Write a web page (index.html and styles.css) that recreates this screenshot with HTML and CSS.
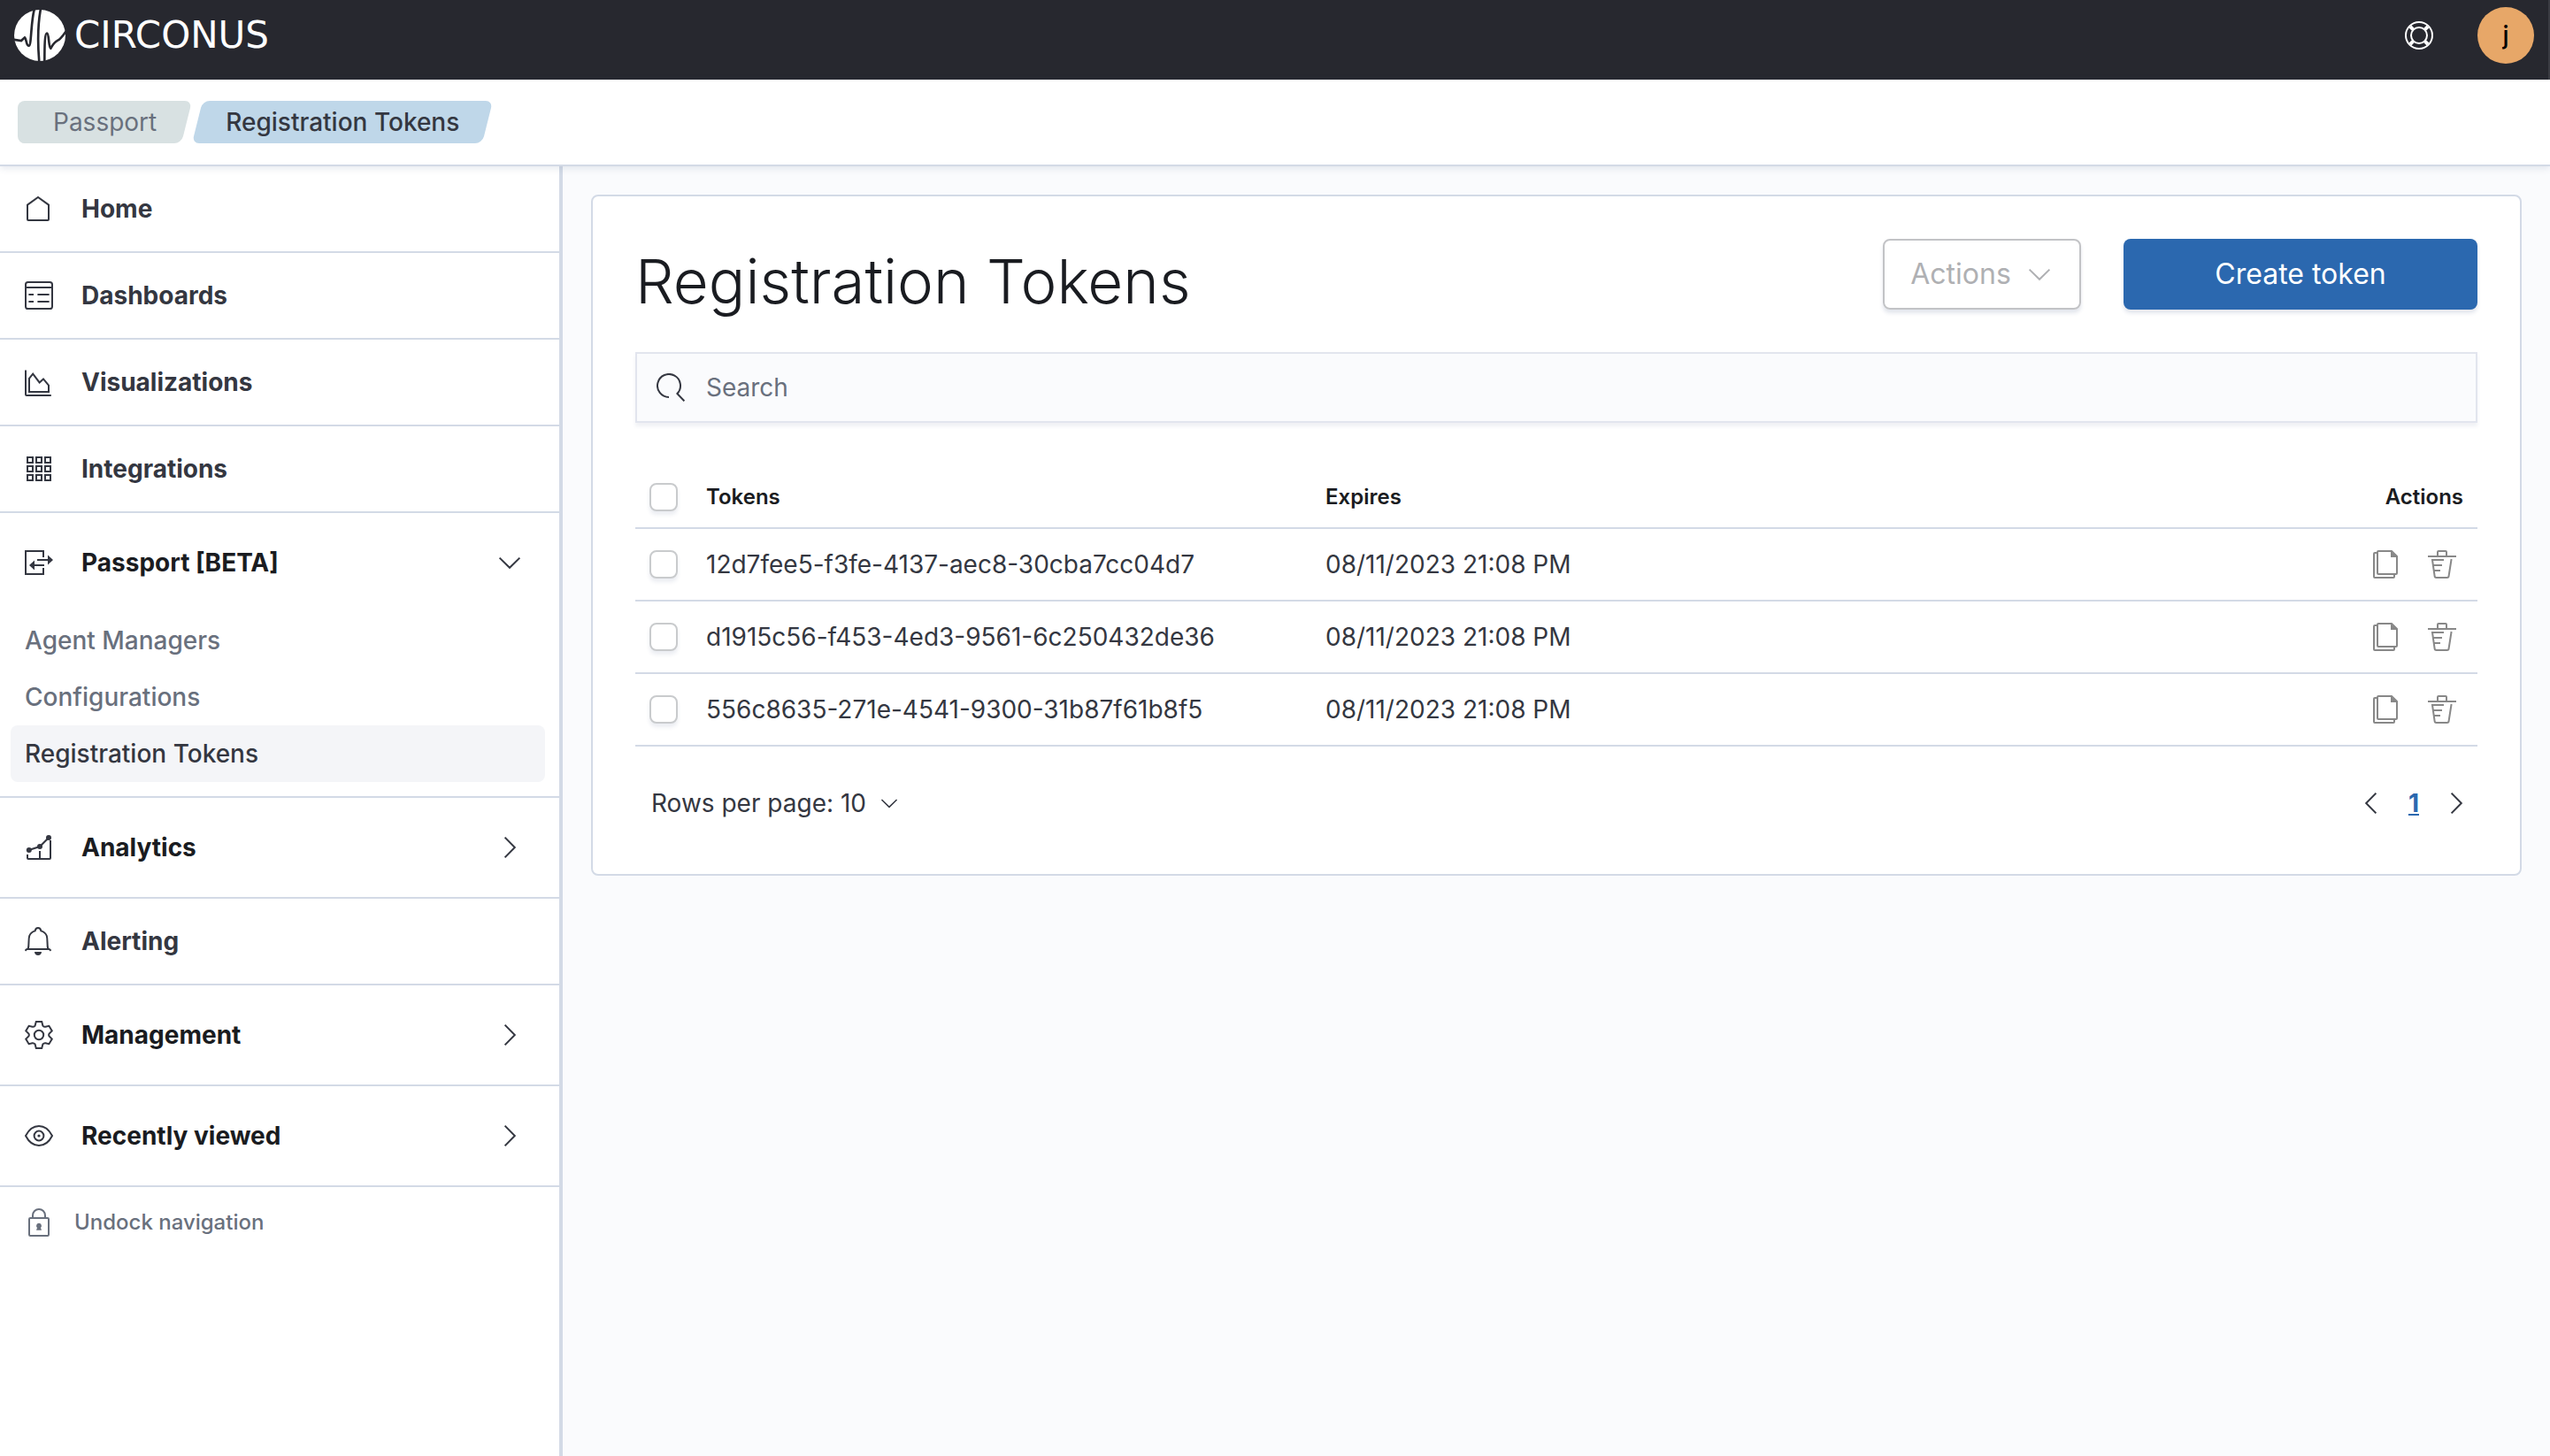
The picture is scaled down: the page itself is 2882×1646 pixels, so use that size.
FILE: index.html
```html
<!DOCTYPE html>
<html lang="en">
<head>
<meta charset="utf-8">
<meta name="viewport" content="width=device-width, initial-scale=1">
<title>Registration Tokens - Circonus</title>
<link rel="stylesheet" href="styles.css">
</head>
<body>
<svg class="sprite" aria-hidden="true">
  <symbol id="i-home" viewBox="0 0 16 16"><path d="M1.5 5.8 7.5 1.5l6 4.3V14a.5.5 0 0 1-.5.5H2a.5.5 0 0 1-.5-.5z"/></symbol>
  <symbol id="i-dashboard" viewBox="0 0 16 16"><rect x=".5" y=".5" width="15" height="15" rx="1.3"/><path d="M.5 3.5h15M2.2 7.5H5M7.2 7.5h6.6M2.2 11.5H5M7.2 11.5h6.6"/></symbol>
  <symbol id="i-area" viewBox="0 0 16 16"><path d="M.5 1.2V15a.5.5 0 0 0 .5.5h13.9M2.5 5.9l2.1-2.6 3.7 4.9 2.2-2 3 3.6v3.7h-11z"/></symbol>
  <symbol id="i-grid" viewBox="0 0 16 16"><path d="M1.5 1.5h3v3h-3zM6.5 1.5h3v3h-3zM11.5 1.5h3v3h-3zM1.5 6.5h3v3h-3zM6.5 6.5h3v3h-3zM11.5 6.5h3v3h-3zM1.5 11.5h3v3h-3zM6.5 11.5h3v3h-3zM11.5 11.5h3v3h-3z"/></symbol>
  <symbol id="i-passport" viewBox="0 0 16 16"><path d="M10.500 5V1.500H.5v13h10V11M7 6.500h6.500M11 9.500H5"/><path class="fill" d="M13 3.700 16 6.500 13 9.300zM5.500 6.700 2.500 9.500l3 2.800z"/></symbol>
  <symbol id="i-analytics" viewBox="0 0 16 16"><path d="M1.500 12v2a.5.5 0 0 0 .5.500h12a.5.5 0 0 0 .5-.5V4M8.500 10v4.500M2.300 9.500l6.200-2 5-5"/><circle class="fill" cx="2.400" cy="9.500" r="1.500"/><circle class="fill" cx="8.500" cy="7.500" r="1.500"/><circle class="fill" cx="13.500" cy="2.500" r="1.500"/></symbol>
  <symbol id="i-bell" viewBox="0 0 16 16"><path d="m.2 13.400 1-.9h12.600l1 .9M1.900 12.500C2.500 9.500 2 6.800 2.600 5c.6-1.600 2-2.400 3.200-2.800C6 .9 6.600.5 7.500.5S9 .9 9.200 2.200c1.200.4 2.600 1.200 3.200 2.800.6 1.800.1 4.500.7 7.500"/><path class="fill" d="M5.500 14h4c0 1.200-.9 2-2 2s-2-.8-2-2z"/></symbol>
  <symbol id="i-gear" viewBox="0 0 16 16"><path d="M5.800 2.800 6.400.5h3.200l.6 2.300Q10.800 3.500 11.700 3.400L13.700 2.900 15.400 5.700 13.800 7.300Q13.400 8 13.800 8.700L15.400 10.300 13.700 13.100 11.700 12.600Q10.800 12.500 10.200 13.200L9.600 15.500H6.400L5.800 13.200Q5.200 12.500 4.300 12.600L2.300 13.100.6 10.300 2.200 8.700Q2.600 8 2.200 7.300L.6 5.700 2.300 2.900 4.300 3.400Q5.200 3.500 5.800 2.800z"/><circle cx="8" cy="8" r="2.600"/></symbol>
  <symbol id="i-eye" viewBox="0 0 16 16"><path d="M.5 8C2.200 4.700 5 2.500 8 2.500s5.800 2.200 7.500 5.500c-1.700 3.300-4.500 5.500-7.500 5.500S2.200 11.300.5 8z"/><circle cx="8" cy="8" r="2.700"/><circle class="fill" cx="8" cy="8" r=".8"/></symbol>
  <symbol id="i-lock" viewBox="0 0 16 16"><rect x="2.500" y="5.500" width="11" height="10" rx=".6"/><path d="M4.500 5.500V4a3.500 3.500 0 0 1 7 0v1.500"/><path class="fill" d="M8 8.400a1.500 1.500 0 0 1 1 2.600l.5 1.400h-3L7 11a1.500 1.500 0 0 1 1-2.600z"/></symbol>
  <symbol id="i-right" viewBox="0 0 16 16"><path d="m5.300 2.300 5.600 5.700-5.600 5.700"/></symbol>
  <symbol id="i-left" viewBox="0 0 16 16"><path d="M10.700 2.300 5.100 8l5.600 5.700"/></symbol>
  <symbol id="i-down" viewBox="0 0 16 16"><path d="M2.300 5.300 8 10.900l5.700-5.600"/></symbol>
  <symbol id="i-search" viewBox="0 0 16 16"><path d="M7 13.500A6.500 6.500 0 1 1 11.700 11.500L15.700 15.700"/></symbol>
  <symbol id="i-help" viewBox="0 0 16 16"><circle cx="8" cy="8" r="7.500"/><circle cx="8" cy="8" r="4.500"/><path class="band" d="M3 3l1.800 1.800M13 3l-1.800 1.800M3 13l1.800-1.800M13 13l-1.800-1.800"/></symbol>
  <symbol id="i-copy" viewBox="0 0 16 16"><path d="M3.500 1.500H2a.5.5 0 0 0-.5.500v13a.5.5 0 0 0 .5.500h10.500a.5.5 0 0 0 .5-.5v-1.500M4 .5h7.500l3 3v9.500a.5.5 0 0 1-.5.500H4a.5.5 0 0 1-.5-.5V1A.5.5 0 0 1 4 .5z"/><path class="fill" d="M11 .5V4h3.800z"/></symbol>
  <symbol id="i-trash" viewBox="0 0 16 16"><path d="M0 3.500h16M5.500 3.500V1a.5.5 0 0 1 .5-.5h4a.5.5 0 0 1 .5.500v2.500M9 5.500H2.500l1.300 9a1 1 0 0 0 1 1h6a1 1 0 0 0 1-1l1.500-9.500M3 8.500h5M3.400 11.500H7"/></symbol>
</svg>

<header class="topbar">
  <a class="brand" href="#" aria-label="Circonus">
    <svg class="brand-mark" viewBox="0 0 174 174" aria-hidden="true">
      <circle cx="87" cy="87" r="87"/>
      <path d="M-4 101 24 105 36 94C42 98 40 122 50 122 59 122 56 40 69-4"/>
      <path d="M90-4C80 50 80 120 85 178"/>
      <path d="M103 178C103 120 104 80 111 80 119 80 116 128 124 131 130 120 136 110 148 104 160 98 168 84 178 70"/>
    </svg>
    <span class="brand-name">CIRCONUS</span>
  </a>
  <div class="topbar-tools">
    <button class="icon-button help" type="button" aria-label="Help"><svg class="icon"><use href="#i-help"/></svg></button>
    <button class="avatar" type="button" aria-label="Account">j</button>
  </div>
</header>

<nav class="breadcrumbs" aria-label="Breadcrumbs">
  <a class="crumb crumb-first" href="#"><span>Passport</span></a>
  <a class="crumb crumb-current" href="#" aria-current="page"><span>Registration Tokens</span></a>
</nav>

<div class="layout">
  <nav class="sidebar" aria-label="Primary">
    <a class="nav-item" href="#"><svg class="icon"><use href="#i-home"/></svg><span>Home</span></a>
    <a class="nav-item" href="#"><svg class="icon"><use href="#i-dashboard"/></svg><span>Dashboards</span></a>
    <a class="nav-item" href="#"><svg class="icon"><use href="#i-area"/></svg><span>Visualizations</span></a>
    <a class="nav-item" href="#"><svg class="icon"><use href="#i-grid"/></svg><span>Integrations</span></a>
    <div class="nav-group">
      <button class="nav-toggle" type="button" aria-expanded="true"><svg class="icon"><use href="#i-passport"/></svg><span>Passport [BETA]</span><svg class="icon"><use href="#i-down"/></svg></button>
      <ul class="subnav">
        <li><a href="#">Agent Managers</a></li>
        <li><a href="#">Configurations</a></li>
        <li><a class="active" href="#">Registration Tokens</a></li>
      </ul>
    </div>
    <div class="nav-group">
      <button class="nav-toggle" type="button" aria-expanded="false"><svg class="icon"><use href="#i-analytics"/></svg><span>Analytics</span><svg class="icon"><use href="#i-right"/></svg></button>
    </div>
    <a class="nav-item" href="#"><svg class="icon"><use href="#i-bell"/></svg><span>Alerting</span></a>
    <div class="nav-group">
      <button class="nav-toggle" type="button" aria-expanded="false"><svg class="icon"><use href="#i-gear"/></svg><span>Management</span><svg class="icon"><use href="#i-right"/></svg></button>
    </div>
    <div class="nav-group">
      <button class="nav-toggle" type="button" aria-expanded="false"><svg class="icon"><use href="#i-eye"/></svg><span>Recently viewed</span><svg class="icon"><use href="#i-right"/></svg></button>
    </div>
    <button class="undock" type="button"><svg class="icon"><use href="#i-lock"/></svg><span>Undock navigation</span></button>
  </nav>

  <main class="content">
    <section class="panel">
      <div class="panel-head">
        <h1>Registration Tokens</h1>
        <div class="panel-actions">
          <button class="button button-outline" type="button" disabled><span>Actions</span><svg class="icon"><use href="#i-down"/></svg></button>
          <button class="button button-primary" type="button">Create token</button>
        </div>
      </div>

      <label class="search">
        <svg class="icon"><use href="#i-search"/></svg>
        <input type="search" placeholder="Search" aria-label="Search">
      </label>

      <table class="tokens">
        <colgroup><col class="col-check"><col class="col-token"><col><col class="col-actions"></colgroup>
        <thead>
          <tr><th class="check"><input type="checkbox" aria-label="Select all tokens"></th><th scope="col">Tokens</th><th scope="col">Expires</th><th class="end" scope="col">Actions</th></tr>
        </thead>
        <tbody>
          <tr>
            <td class="check"><input type="checkbox" aria-label="Select token 12d7fee5"></td>
            <td>12d7fee5-f3fe-4137-aec8-30cba7cc04d7</td>
            <td>08/11/2023 21:08 PM</td>
            <td><div class="row-actions"><button class="icon-button" type="button" aria-label="Copy token"><svg class="icon"><use href="#i-copy"/></svg></button><button class="icon-button" type="button" aria-label="Delete token"><svg class="icon"><use href="#i-trash"/></svg></button></div></td>
          </tr>
          <tr>
            <td class="check"><input type="checkbox" aria-label="Select token d1915c56"></td>
            <td>d1915c56-f453-4ed3-9561-6c250432de36</td>
            <td>08/11/2023 21:08 PM</td>
            <td><div class="row-actions"><button class="icon-button" type="button" aria-label="Copy token"><svg class="icon"><use href="#i-copy"/></svg></button><button class="icon-button" type="button" aria-label="Delete token"><svg class="icon"><use href="#i-trash"/></svg></button></div></td>
          </tr>
          <tr>
            <td class="check"><input type="checkbox" aria-label="Select token 556c8635"></td>
            <td>556c8635-271e-4541-9300-31b87f61b8f5</td>
            <td>08/11/2023 21:08 PM</td>
            <td><div class="row-actions"><button class="icon-button" type="button" aria-label="Copy token"><svg class="icon"><use href="#i-copy"/></svg></button><button class="icon-button" type="button" aria-label="Delete token"><svg class="icon"><use href="#i-trash"/></svg></button></div></td>
          </tr>
        </tbody>
      </table>

      <div class="table-foot">
        <button class="page-size" type="button"><span>Rows per page: 10</span><svg class="icon"><use href="#i-down"/></svg></button>
        <nav class="pager" aria-label="Pagination">
          <button class="icon-button" type="button" aria-label="Previous page"><svg class="icon"><use href="#i-left"/></svg></button>
          <a class="page-current" href="#" aria-current="page">1</a>
          <button class="icon-button" type="button" aria-label="Next page"><svg class="icon"><use href="#i-right"/></svg></button>
        </nav>
      </div>
    </section>
  </main>
</div>
</body>
</html>
```
FILE: styles.css
```css
:root {
  --border: #d3dae6;
  --ink: #343741;
  --title: #1a1c21;
  --subdued: #69707d;
  --primary: #2b68af;
  --page: #fafbfd;
}

* { box-sizing: border-box; }

body {
  margin: 0;
  min-height: 100vh;
  display: flex;
  flex-direction: column;
  background: var(--page);
  color: var(--ink);
  font: 400 28px/40px Inter, "Liberation Sans", sans-serif;
}

a { color: inherit; text-decoration: none; }

button {
  padding: 0;
  border: 0;
  background: none;
  color: inherit;
  font: inherit;
  cursor: pointer;
}

.sprite { position: absolute; width: 0; height: 0; }

.icon {
  flex: none;
  display: block;
  width: 32px;
  height: 32px;
  fill: none;
  stroke: currentColor;
  stroke-width: 1;
}

.fill { fill: currentColor; stroke: none; }
.band { stroke-width: 2; }

.icon-button { display: block; }

/* Top bar */
.topbar {
  display: flex;
  align-items: center;
  justify-content: space-between;
  padding: 8px 16px 18px;
  border-right: 2px solid #3b3c43;
  background: #27282f;
  color: #fff;
}

.brand { display: flex; align-items: center; gap: 10px; }

.brand-mark { width: 58px; height: 58px; fill: #fff; }

.brand-mark path { fill: none; stroke: #27282f; stroke-width: 8; }

.brand-name { font: 400 42px/40px "DejaVu Sans", sans-serif; }

.topbar-tools { display: flex; align-items: center; gap: 50px; }

.avatar {
  width: 64px;
  height: 64px;
  border-radius: 50%;
  background: #e7a768;
  color: #000;
  font-weight: 500;
}

/* Breadcrumbs */
.breadcrumbs {
  position: relative;
  z-index: 1;
  display: flex;
  padding: 24px 20px;
  border-bottom: 2px solid var(--border);
  background: #fff;
  box-shadow: 0 2px 8px rgba(60, 80, 130, .14);
}

.crumb {
  position: relative;
  z-index: 0;
  padding: 4px 38px;
  font-weight: 500;
}

.crumb::before,
.crumb-first::after {
  content: "";
  position: absolute;
  z-index: -1;
  inset: 0 6px;
  border-radius: 8px;
  background: #bfd7e9;
  transform: skewX(-14deg);
}

.crumb-first { padding: 4px 40px; color: var(--subdued); font-weight: 400; }

.crumb-first::before { background: #d8e1e2; }

.crumb-first::after {
  inset: 0 24px 0 0;
  background: #d8e1e2;
  transform: none;
}

/* Sidebar */
.layout { flex: 1; display: flex; }

.sidebar {
  flex: none;
  width: 636px;
  border-right: 4px solid var(--border);
  background: #fff;
}

.nav-item,
.nav-toggle {
  display: flex;
  align-items: center;
  gap: 32px;
  width: 100%;
  padding: 28px 40px 28px 28px;
  font-weight: 700;
  text-align: left;
}

.nav-toggle { padding-block: 36px; color: var(--title); }

.nav-toggle .icon { color: var(--ink); }

.nav-toggle span { flex: 1; }

.nav-item,
.nav-group { border-bottom: 2px solid var(--border); }

.subnav {
  margin: 0;
  padding: 0 16px 16px 12px;
  list-style: none;
}

.subnav a {
  display: block;
  padding: 12px 16px;
  border-radius: 8px;
  color: var(--subdued);
  font-weight: 500;
}

.subnav .active { background: #f4f5f8; color: var(--ink); }

.undock {
  display: flex;
  align-items: center;
  gap: 24px;
  padding: 20px 28px;
  color: var(--subdued);
  font-size: 24px;
  font-weight: 500;
}

/* Content */
.content { flex: 1; min-width: 0; padding: 32px; }

.panel {
  padding: 48px;
  border: 2px solid var(--border);
  border-radius: 8px;
  background: #fff;
}

.panel-head {
  display: flex;
  align-items: flex-start;
  justify-content: space-between;
  margin-bottom: 32px;
}

h1 {
  margin: 0;
  color: var(--title);
  font-size: 69px;
  font-weight: 300;
  line-height: 96px;
}

.panel-actions { display: flex; gap: 48px; }

.button {
  display: flex;
  align-items: center;
  justify-content: center;
  gap: 16px;
  height: 80px;
  border-radius: 8px;
  box-shadow: 0 4px 4px rgba(60, 80, 130, .14);
  font-size: 32px;
}

.button-outline {
  width: 224px;
  border: 2px solid #c2c3c6;
  color: #afb0b3;
}

.button-primary { width: 400px; background: var(--primary); color: #fff; }

.search {
  display: flex;
  align-items: center;
  gap: 24px;
  height: 80px;
  margin-bottom: 50px;
  padding: 0 22px;
  border: 2px solid #e2e5ee;
  background: var(--page);
  box-shadow: 0 4px 4px rgba(60, 80, 130, .08);
}

.search input {
  flex: 1;
  padding: 0;
  border: 0;
  outline: 0;
  background: none;
  color: inherit;
  font: inherit;
}

.search input::placeholder { color: var(--subdued); opacity: 1; }

/* Tokens table */
.tokens {
  width: 100%;
  table-layout: fixed;
  border-spacing: 0;
}

.col-check { width: 64px; }
.col-token { width: 700px; }
.col-actions { width: 200px; }

.tokens th,
.tokens td {
  height: 82px;
  padding: 0 16px;
  border-bottom: 2px solid var(--border);
  text-align: left;
}

.tokens th {
  height: 70px;
  color: var(--title);
  font-size: 24px;
  font-weight: 600;
}

.tokens .end { text-align: right; }

.check input {
  appearance: none;
  display: block;
  width: 32px;
  height: 32px;
  margin: 0;
  border: 2px solid #c9cbcd;
  border-radius: 8px;
  background: #fff;
  box-shadow: 0 4px 4px rgba(60, 80, 130, .1);
}

.row-actions {
  display: flex;
  justify-content: flex-end;
  gap: 32px;
  padding-right: 8px;
  color: #888;
}

.table-foot {
  display: flex;
  align-items: center;
  justify-content: space-between;
  margin-top: 32px;
  padding: 12px 8px 12px 18px;
}

.page-size { display: flex; align-items: center; gap: 14px; }

.page-size .icon { width: 24px; height: 24px; }

.pager { display: flex; align-items: center; gap: 26px; }

.page-current {
  color: var(--primary);
  font-weight: 700;
  text-decoration: underline;
}
```
